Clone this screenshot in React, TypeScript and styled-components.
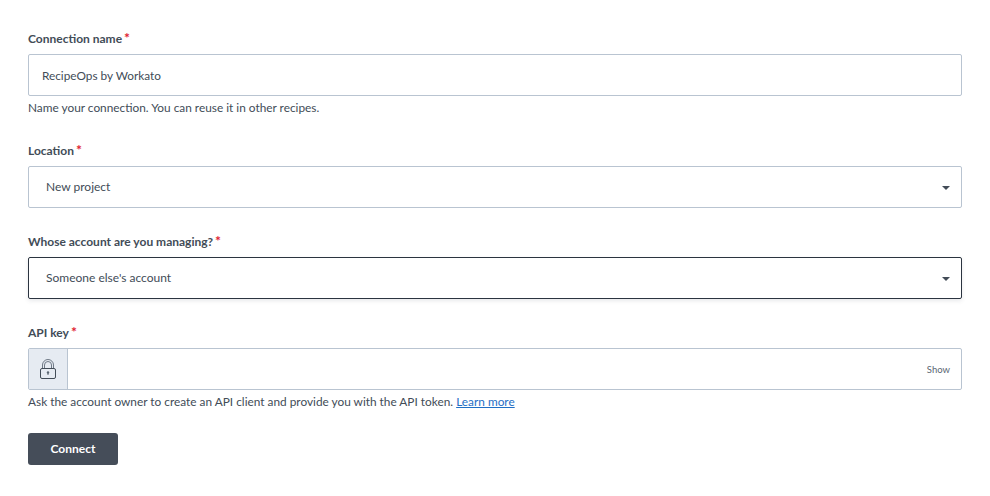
import React from "react";
import styled, { createGlobalStyle } from "styled-components";

const GlobalStyle = createGlobalStyle`
  html, body {
    margin: 0;
    padding: 0;
    background: #fff;
    font-family: "Lato", "Noto Sans", sans-serif;
    color: #424c57;
  }
`;

const Form = styled.form`
  display: flex;
  flex-direction: column;
  width: 934px;
  padding: 30px 0 0 28px;
`;

const Field = styled.div<{ $gap: number }>`
  margin-bottom: ${(p) => p.$gap}px;
`;

const Label = styled.label`
  display: block;
  height: 17px;
  margin-bottom: 7px;
  font-size: 12px;
  line-height: 17px;
  font-weight: 700;
  color: #424c57;
`;

const Required = styled.span`
  margin-left: 2px;
  font-size: 14px;
  line-height: 0;
  color: #e0202f;
`;

const TextInput = styled.div`
  display: flex;
  align-items: center;
  box-sizing: border-box;
  height: 42px;
  padding: 0 13px;
  border: 1px solid #b9c4d1;
  border-radius: 2px;
  font-size: 11.8px;
`;

const Select = styled.div<{ $focused?: boolean }>`
  display: flex;
  align-items: center;
  justify-content: space-between;
  box-sizing: border-box;
  height: 42px;
  padding: 0 11px 1px 17px;
  border: 1px solid ${(p) => (p.$focused ? "#2b3440" : "#b9c4d1")};
  border-radius: 2px;
  font-size: 12px;
  box-shadow: ${(p) => (p.$focused ? "0 2px 4px rgba(66, 76, 87, 0.12)" : "none")};
`;

const Caret = styled.span`
  width: 0;
  height: 0;
  margin-top: 2px;
  border-left: 4px solid transparent;
  border-right: 4px solid transparent;
  border-top: 4px solid #424c57;
`;

const SecretInput = styled.div`
  display: flex;
  align-items: center;
  box-sizing: border-box;
  height: 42px;
  border: 1px solid #b9c4d1;
  border-radius: 2px;
`;

const Addon = styled.div`
  display: flex;
  align-items: center;
  justify-content: center;
  box-sizing: border-box;
  width: 39px;
  height: 100%;
  background: #e6ebf2;
  border-right: 1px solid #b9c4d1;
`;

const ShowToggle = styled.span`
  margin-left: auto;
  padding-right: 11px;
  font-size: 9.5px;
  color: #5b6672;
`;

const Hint = styled.div`
  margin-top: 4px;
  font-size: 11.85px;
  line-height: 16px;
  color: #424c57;
`;

const HintLink = styled.a`
  color: #1f6fc5;
  text-decoration: underline;
`;

const ConnectButton = styled.button`
  display: block;
  width: 90px;
  height: 32px;
  padding: 0 0 2px;
  border: 0;
  border-radius: 3px;
  background: #454d59;
  color: #fff;
  font-family: inherit;
  font-size: 12px;
  font-weight: 700;
`;

const LockIcon = () => (
  <svg width="16" height="20" viewBox="0 0 16 20" fill="none">
    <path d="M2.5 9.5V6a5.5 5.5 0 0 1 11 0v3.5" stroke="#6f7986" strokeWidth="1" />
    <path d="M4.5 9.5V6a3.5 3.5 0 0 1 7 0v3.5" stroke="#6f7986" strokeWidth="1" />
    <rect x="0.5" y="9.5" width="15" height="10" rx="1.5" stroke="#424c57" strokeWidth="1" fill="#e6ebf2" />
    <circle cx="8" cy="13.5" r="1.2" fill="#5b6672" />
    <path d="M8 14v2" stroke="#5b6672" strokeWidth="1" />
  </svg>
);

const App = () => (
  <>
    <GlobalStyle />
    <Form>
      <Field $gap={26}>
        <Label>
          Connection name<Required>*</Required>
        </Label>
        <TextInput>RecipeOps by Workato</TextInput>
        <Hint>Name your connection. You can reuse it in other recipes.</Hint>
      </Field>
      <Field $gap={25}>
        <Label>
          Location<Required>*</Required>
        </Label>
        <Select>
          New project
          <Caret />
        </Select>
      </Field>
      <Field $gap={25}>
        <Label>
          Whose account are you managing?<Required>*</Required>
        </Label>
        <Select $focused>
          Someone else's account
          <Caret />
        </Select>
      </Field>
      <Field $gap={23}>
        <Label>
          API key<Required>*</Required>
        </Label>
        <SecretInput>
          <Addon>
            <LockIcon />
          </Addon>
          <ShowToggle>Show</ShowToggle>
        </SecretInput>
        <Hint>
          Ask the account owner to create an API client and provide you with the API token.{" "}
          <HintLink>Learn more</HintLink>
        </Hint>
      </Field>
      <ConnectButton type="button">Connect</ConnectButton>
    </Form>
  </>
);

export default App;
